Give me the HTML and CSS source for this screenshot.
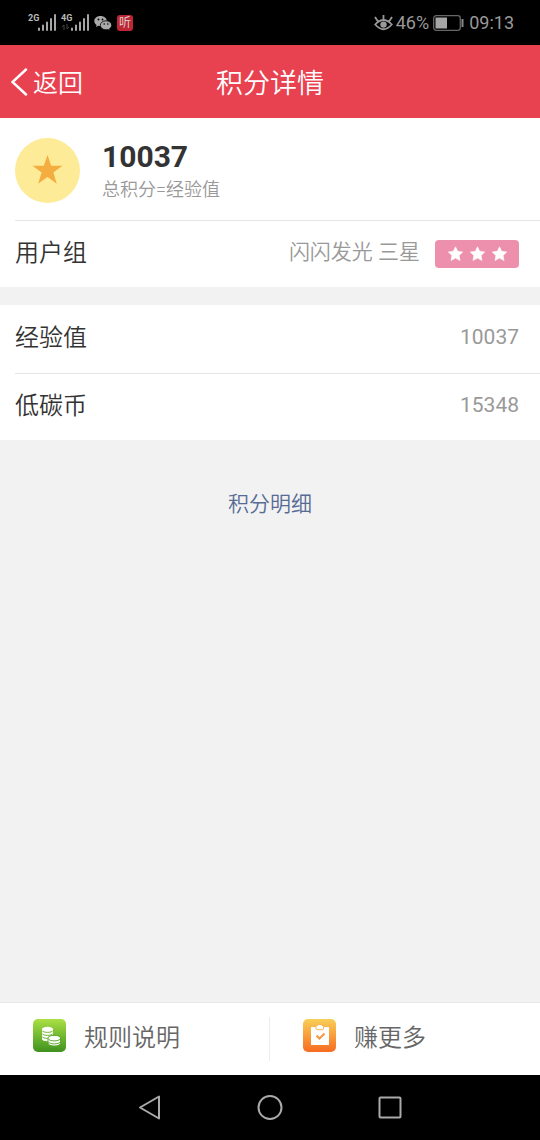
FILE: index.html
```html
<!DOCTYPE html>
<html lang="zh-CN">
<head>
<meta charset="utf-8">
<meta name="viewport" content="width=device-width, initial-scale=1">
<title>积分详情</title>
<link rel="stylesheet" href="styles.css">
</head>
<body>
<div class="screen">
  <div class="status">
    <div class="status-left">
      <div class="signal">
        <span class="net">2G</span>
        <svg width="18" height="20" viewBox="0 0 18 20" aria-hidden="true">
          <path class="bars" d="M1 15.500V17M5 12.500V17M9 9.500V17M13 6V17M17 2V17"/>
        </svg>
      </div>
      <div class="signal">
        <span class="net">4G
          <svg width="9" height="6" viewBox="0 0 9 6" aria-hidden="true"><path class="arrows" d="M3 6V1L1 3M6 0v5l2-2"/></svg>
        </span>
        <svg width="18" height="20" viewBox="0 0 18 20" aria-hidden="true">
          <path class="bars" d="M1 15.500V17M5 12.500V17M9 9.500V17M13 6V17M17 2V17"/>
        </svg>
      </div>
      <svg class="wechat" width="18" height="16" viewBox="0 0 18 16" aria-hidden="true">
        <path fill="#aaa" d="M6.500 1C2.900 1 .3 3.200.3 6c0 1.600.9 3 2.300 3.900L2 12l2.400-1.200c.7.200 1.400.3 2.100.3C10 11 12.800 8.800 12.800 6S10 1 6.500 1z"/>
        <path fill="#aaa" stroke="#000" stroke-width=".8" d="M12 5.800c-3.200 0-5.700 2-5.700 4.500s2.500 4.500 5.700 4.500c.7 0 1.300-.1 1.900-.3l2.200 1.100-.6-1.900c1.300-.8 2.200-2 2.200-3.400 0-2.500-2.500-4.500-5.700-4.500z"/>
        <g fill="#000"><circle cx="4.500" cy="4.500" r=".9"/><circle cx="8.500" cy="4.500" r=".9"/><circle cx="10.200" cy="9" r=".8"/><circle cx="13.800" cy="9" r=".8"/></g>
      </svg>
      <span class="app-badge">听</span>
    </div>
    <div class="status-right">
      <svg width="19" height="18" viewBox="0 0 19 18" fill="none" stroke="#999" stroke-width="1.800" aria-hidden="true">
        <path d="M1.200 10.500Q9.500 1.500 17.800 10.500Q9.500 20 1.200 10.500zM9.500 5.500V1M4 7.500L1 3M15 7.500l3-4.500"/>
        <circle cx="9.500" cy="10.600" r="3.200" fill="#999" stroke="none"/>
      </svg>
      <span class="percent">46%</span>
      <svg class="battery" width="31" height="16" viewBox="0 0 31 16" aria-hidden="true">
        <rect x=".7" y=".7" width="26.600" height="14.600" rx="2.500" fill="none" stroke="#666" stroke-width="1.300"/>
        <path fill="#a6a6a6" d="M2.500 2.500H14v11H2.500z"/><path fill="#888" d="M28.500 4h2v8h-2z"/>
      </svg>
      <time>09:13</time>
    </div>
  </div>

  <header class="header">
    <button class="back" type="button">
      <svg width="18" height="32" viewBox="0 0 18 32" fill="none" stroke="#fff" stroke-width="2.500" stroke-linecap="round" aria-hidden="true"><path d="M15 1.500L1.500 14 15 26.500"/></svg>
      <span class="back-text">返回</span>
    </button>
    <h1 class="title">积分详情</h1>
  </header>

  <main class="content">
    <section class="card">
      <div class="summary">
        <svg class="medal" width="65" height="65" viewBox="0 0 65 65" aria-hidden="true">
          <circle cx="32.500" cy="32.500" r="32.500" fill="#feeb98"/>
          <path fill="#f4ae40" d="M32.500 17l3.700 10.800h11.300l-9.100 6.800 3.400 11.100-9.300-6.600-9.300 6.600 3.400-11.100-9.100-6.800h11.300z"/>
        </svg>
        <div class="summary-text">
          <strong class="total">10037</strong>
          <span class="formula">总积分=经验值</span>
        </div>
      </div>
      <div class="row">
        <span class="label">用户组</span>
        <span class="value">闪闪发光 三星</span>
        <svg class="stars" width="84" height="28" viewBox="0 0 84 28" role="img" aria-label="三星">
          <defs><path id="star" d="M0-7.200L2.200-2.700 7.200-2 3.600 1.500 4.500 6.500 0 4.100-4.500 6.500-3.600 1.500-7.200-2-2.200-2.700z"/></defs>
          <rect width="84" height="28" rx="4" fill="#ed90ae"/>
          <g fill="#fff" stroke="#fff" stroke-width=".6"><use href="#star" x="20.500" y="14"/><use href="#star" x="42.500" y="14"/><use href="#star" x="64.500" y="14"/></g>
        </svg>
      </div>
    </section>

    <section class="card">
      <div class="row"><span class="label">经验值</span><span class="value number">10037</span></div>
      <div class="row"><span class="label">低碳币</span><span class="value number">15348</span></div>
    </section>

    <a class="detail" href="#">积分明细</a>
  </main>

  <footer class="tabs">
    <button class="tab" type="button">
      <svg width="33" height="33" viewBox="0 0 33 33" aria-hidden="true">
        <defs><linearGradient id="green" x2="0" y2="1"><stop stop-color="#aae043"/><stop offset="1" stop-color="#3f921f"/></linearGradient></defs>
        <rect width="33" height="33" rx="5" fill="url(#green)"/>
        <path fill="#fff" d="M9 10v10c0 3 11 3 11 0V10z"/><ellipse cx="14.500" cy="10" rx="5.500" ry="2.200" fill="#fff"/>
        <path fill="none" stroke="#69b62e" d="M9 11.500c1 2.500 10 2.500 11 0M9 14.500c1 2.500 10 2.500 11 0M9 17.500c1 2.500 10 2.500 11 0"/>
        <path fill="#fff" stroke="#5aa929" d="M15 19v5c0 4 12.500 4 12.500 0v-5c0-3.500-12.500-3.500-12.500 0z"/>
        <path fill="none" stroke="#5aa929" d="M15.500 20c1 2.500 10.500 2.500 11.500 0M15.500 23c1 2.500 10.500 2.500 11.500 0"/>
      </svg>
      规则说明
    </button>
    <button class="tab" type="button">
      <svg width="33" height="33" viewBox="0 0 33 33" aria-hidden="true">
        <defs><linearGradient id="orange" x2="0" y2="1"><stop stop-color="#f8cf57"/><stop offset="1" stop-color="#f86c20"/></linearGradient></defs>
        <rect width="33" height="33" rx="5" fill="url(#orange)"/>
        <path fill="#fff" d="M8 8h18v18H8z"/>
        <path fill="#fff" stroke="#fab14a" d="M13 7.500c0-.8.600-1 1.500-1 .5-1.500 4-1.500 4.500 0 .9 0 1.500.2 1.500 1v2c0 .8-.5 1.200-1.200 1.200h-5.100c-.7 0-1.200-.4-1.200-1.200z"/>
        <path fill="none" stroke="#f79642" stroke-width="2" d="M13.500 16.500l3 3 5-5"/>
      </svg>
      赚更多
    </button>
  </footer>

  <nav class="system">
    <button class="key" type="button" aria-label="后退"><svg width="26" height="28" viewBox="0 0 26 28"><path d="M3 13.500L22 2.500v22z"/></svg></button>
    <button class="key" type="button" aria-label="主页"><svg width="26" height="28" viewBox="0 0 26 28"><circle cx="13" cy="13.500" r="11.500"/></svg></button>
    <button class="key" type="button" aria-label="最近任务"><svg width="26" height="28" viewBox="0 0 26 28"><rect x="2.500" y="3.500" width="21" height="20" rx="1"/></svg></button>
  </nav>
</div>
</body>
</html>
```
FILE: styles.css
```css
* { box-sizing: border-box; }

body {
  margin: 0;
  font-family: Roboto, "Noto Sans CJK SC", sans-serif;
  font-weight: 350;
  background: #f2f2f2;
}

button {
  margin: 0;
  padding: 0;
  border: 0;
  background: none;
  font: inherit;
  color: inherit;
}

svg { display: block; flex: none; }

.screen {
  display: flex;
  flex-direction: column;
  min-height: 100vh;
}

.status {
  display: flex;
  justify-content: space-between;
  align-items: center;
  height: 45px;
  padding: 0 26px 0 28px;
  background: #000;
  color: #999;
}

.status-left,
.status-right {
  display: flex;
  align-items: center;
}

.status-left { gap: 5px; }
.status-right { gap: 3px; font-size: 18px; font-weight: 400; line-height: 22px; }
.battery { margin: 0 2px 0 1px; }

.signal {
  display: flex;
  align-items: flex-start;
  width: 28px;
}

.signal > svg { margin-left: -1px; }

.net {
  width: 11px;
  color: #bbb;
  font-size: 9px;
  font-weight: 700;
  line-height: 11px;
}

.bars {
  fill: none;
  stroke: #a6a6a6;
  stroke-width: 2;
  stroke-linecap: round;
}

.arrows { fill: none; stroke: #444; }

.app-badge {
  width: 16px;
  height: 16px;
  border-radius: 3px;
  background: #bd2635;
  color: #ddd;
  font-size: 12px;
  line-height: 16px;
  text-align: center;
}

.header {
  display: grid;
  grid-template-columns: 1fr auto 1fr;
  align-items: center;
  height: 73px;
  padding: 4px 11px 0;
  background: #e84150;
  color: #fff;
}

.back {
  display: flex;
  align-items: center;
  gap: 4px;
  font-size: 25px;
  line-height: 36px;
}

.title {
  margin: 0;
  font-size: 27px;
  font-weight: 350;
  line-height: 40px;
}

.content { flex: 1; }

.card {
  padding-left: 15px;
  margin-bottom: 18px;
  background: #fff;
}

.summary {
  display: flex;
  align-items: center;
  gap: 22px;
  height: 102px;
  padding-top: 3px;
}

.summary-text {
  display: flex;
  flex-direction: column;
  padding-top: 2px;
}

.total {
  color: #333;
  font-size: 30px;
  font-weight: 700;
  line-height: 36px;
}

.formula {
  color: #999;
  font-size: 18px;
  line-height: 30px;
}

.row {
  display: flex;
  align-items: center;
  min-height: 67px;
  padding: 0 21px 4px 0;
}

.row + .row,
.summary + .row { border-top: 1px solid #e6e6e6; }

.row:first-child { height: 68px; }

.label {
  margin-right: auto;
  padding-top: 2px;
  color: #333;
  font-size: 24px;
  line-height: 36px;
}

.value {
  color: #999;
  font-size: 21px;
  line-height: 32px;
}

.number { font-weight: 400; }

.stars { margin: 4px 0 0 15px; }

.detail {
  display: block;
  width: max-content;
  margin: 48px auto 0;
  color: #576b95;
  font-size: 21px;
  line-height: 32px;
  text-decoration: none;
}

.tabs {
  display: flex;
  align-items: center;
  height: 73px;
  border-top: 1px solid #e9e9e9;
  background: #fff;
}

.tab {
  display: flex;
  flex: 1;
  align-items: center;
  gap: 18px;
  height: 44px;
  padding: 0 0 8px 33px;
  color: #666;
  font-size: 24px;
}

.tab + .tab { box-shadow: -1px 0 #ececec; }

.system {
  display: flex;
  justify-content: center;
  align-items: center;
  gap: 94px;
  height: 65px;
  background: #000;
}

.key svg {
  fill: none;
  stroke: #aaa;
  stroke-width: 2;
  stroke-linejoin: round;
}
```
